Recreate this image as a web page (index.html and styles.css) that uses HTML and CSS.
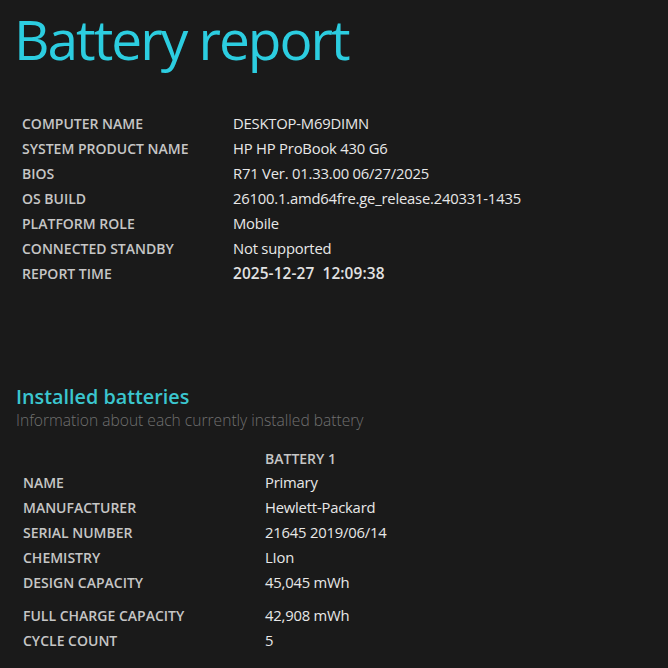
FILE: index.html
```html
<!DOCTYPE html>
<html>
<head>
<meta charset="utf-8">
<link rel="stylesheet" href="styles.css">
</head>
<body>
<h1 class="title">Battery report</h1>
<table class="info">
  <tr><td class="label">COMPUTER NAME</td><td class="value">DESKTOP-M69DIMN</td></tr>
  <tr><td class="label">SYSTEM PRODUCT NAME</td><td class="value">HP HP ProBook 430 G6</td></tr>
  <tr><td class="label">BIOS</td><td class="value">R71 Ver. 01.33.00 06/27/2025</td></tr>
  <tr><td class="label">OS BUILD</td><td class="value">26100.1.amd64fre.ge_release.240331-1435</td></tr>
  <tr><td class="label">PLATFORM ROLE</td><td class="value">Mobile</td></tr>
  <tr><td class="label">CONNECTED STANDBY</td><td class="value">Not supported</td></tr>
  <tr><td class="label">REPORT TIME</td><td class="value strong">2025-12-27&nbsp; 12:09:38</td></tr>
</table>
<h2 class="section">Installed batteries</h2>
<div class="subtitle">Information about each currently installed battery</div>
<table class="batt">
  <tr class="headrow"><td class="label"></td><td class="head">BATTERY 1</td></tr>
  <tr><td class="label">NAME</td><td class="value">Primary</td></tr>
  <tr><td class="label">MANUFACTURER</td><td class="value">Hewlett-Packard</td></tr>
  <tr><td class="label">SERIAL NUMBER</td><td class="value">21645 2019/06/14</td></tr>
  <tr><td class="label">CHEMISTRY</td><td class="value">LIon</td></tr>
  <tr class="gap"><td class="label">DESIGN CAPACITY</td><td class="value">45,045 mWh</td></tr>
  <tr><td class="label">FULL CHARGE CAPACITY</td><td class="value">42,908 mWh</td></tr>
  <tr><td class="label">CYCLE COUNT</td><td class="value">5</td></tr>
</table>
</body>
</html>
```
FILE: styles.css
```css
html, body {
  margin: 0;
  background: #1a1a1a;
}
body {
  padding: 0 0 0 14px;
  font-family: "Open Sans", "Noto Sans", sans-serif;
  color: #e8e8e8;
}
.title {
  margin: 0;
  padding-top: 2px;
  font-size: 55px;
  font-weight: 400;
  line-height: 74px;
  color: #2ccde0;
  letter-spacing: -2px;
}
.info, .batt {
  border-collapse: collapse;
}
.info {
  margin-top: 37px;
  margin-left: 8px;
}
td {
  padding: 0;
  height: 25px;
  vertical-align: baseline;
  white-space: nowrap;
}
.label {
  font-size: 14px;
  font-weight: 600;
  color: #c6c6c6;
  letter-spacing: 0;
}
.value {
  font-size: 14.8px;
  color: #e8e8e8;
  letter-spacing: -0.2px;
}
.value.strong {
  font-size: 15.4px;
  font-weight: 600;
  letter-spacing: 0.1px;
  color: #e2e2e2;
}
.info .label {
  width: 211px;
}
.section {
  margin: 96px 0 0 2px;
  font-size: 19.8px;
  font-weight: 600;
  line-height: 26px;
  color: #3bc6cf;
}
.subtitle {
  margin-left: 2px;
  font-size: 15.6px;
  font-weight: 300;
  color: #707070;
  line-height: 20px;
}
.batt {
  margin-top: 21px;
  margin-left: 9px;
}
.batt .label {
  width: 242px;
}
.head {
  font-size: 14px;
  font-weight: 600;
  color: #c6c6c6;
}
.headrow td {
  height: 21px;
  line-height: 16px;
  vertical-align: top;
}
.gap td {
  height: 33px;
}
```
